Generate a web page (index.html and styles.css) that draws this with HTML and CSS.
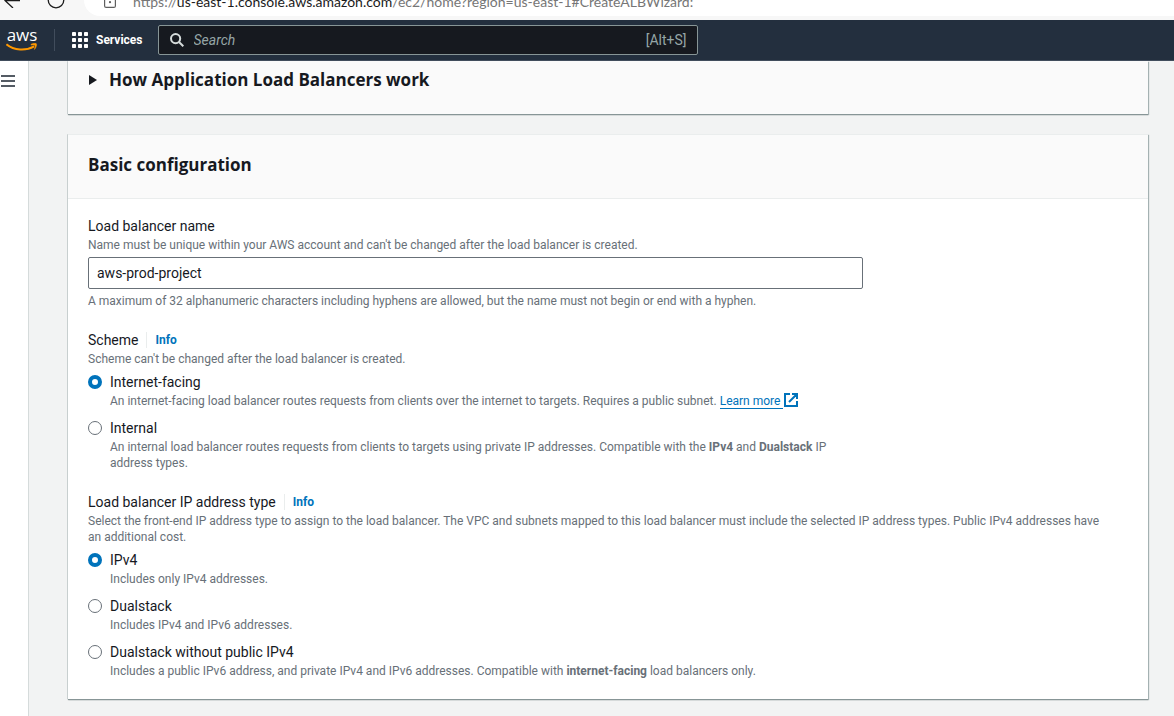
FILE: index.html
```html
<!DOCTYPE html>
<html lang="en">
<head>
<meta charset="utf-8">
<meta name="viewport" content="width=device-width, initial-scale=1">
<title>Create Application Load Balancer</title>
<link rel="stylesheet" href="styles.css">
</head>
<body>
<div class="browser">
  <div class="browser-row">
    <button class="tool back" aria-label="Back"><svg width="20" height="16" viewBox="0 0 20 16" fill="none" stroke="#1b1b1b" stroke-width="1.3"><path d="M19 8.500H4M12 1L4 8.500l8 7.500"/></svg></button>
    <button class="tool reload" aria-label="Reload"><svg width="18" height="18" viewBox="0 0 18 18" fill="none" stroke="#1b1b1b" stroke-width="1.3"><circle cx="9" cy="9" r="7.800"/></svg></button>
    <div class="address">
      <svg class="lock" width="12" height="16" viewBox="0 0 12 16" fill="none" stroke="#5f5f5f" stroke-width="1.2"><rect x=".6" y="5" width="10.800" height="10.400" rx="1.500"/><path d="M3 5V3.500a3 3 0 0 1 6 0V5"/><circle cx="6" cy="10.200" r=".5"/></svg>
      <span class="url">https://<span class="host">us-east-1.console.aws.amazon.com</span>/ec2/home?region=us-east-1#CreateALBWizard:</span>
    </div>
  </div>
</div>
<header class="nav">
  <a class="logo" href="#" aria-label="AWS">
    <span class="logo-text">aws</span>
    <svg class="smile" width="32" height="9" viewBox="0 0 32 9"><path d="M.4 1.200C8 7.600 20 8 28.200 3.300" fill="none" stroke="#f90" stroke-width="2"/><path d="M25 1.300c2-1 4.700-1.300 5.400-.5s-.3 4-2 5.700c.5-1.600 1-3.400.6-4-.5-.6-2.400-.6-4-.4z" fill="#f90" stroke="#f90" stroke-width=".5"/></svg>
  </a>
  <button class="services">
    <svg width="16" height="16" viewBox="0 0 16 16" fill="#fff"><rect width="4" height="4" rx=".8"/><rect x="6" width="4" height="4" rx=".8"/><rect x="12" width="4" height="4" rx=".8"/><rect y="6" width="4" height="4" rx=".8"/><rect x="6" y="6" width="4" height="4" rx=".8"/><rect x="12" y="6" width="4" height="4" rx=".8"/><rect y="12" width="4" height="4" rx=".8"/><rect x="6" y="12" width="4" height="4" rx=".8"/><rect x="12" y="12" width="4" height="4" rx=".8"/></svg>
    <span>Services</span>
  </button>
  <label class="search">
    <svg width="14" height="14" viewBox="0 0 14 14" fill="none" stroke="#d5dbdb" stroke-width="2"><circle cx="5.600" cy="5.600" r="4.600"/><path d="M9 9l4.300 4.300"/></svg>
    <input type="search" placeholder="Search" aria-label="Search">
    <span class="keys">[Alt+S]</span>
  </label>
</header>
<div class="shell">
  <aside class="rail">
    <button class="menu" aria-label="Open navigation"><svg width="14" height="12" viewBox="0 0 14 12" fill="#545b64"><path d="M0 0h14v2H0zM0 5h14v2H0zM0 10h14v2H0z"/></svg></button>
  </aside>
  <main class="main">
    <section class="card how">
      <button class="expander">
        <svg width="8" height="10" viewBox="0 0 8 10" fill="#16191f"><path d="M0 0l8 5-8 5z"/></svg>
        <span>How Application Load Balancers work</span>
      </button>
    </section>
    <section class="card">
      <div class="card-head"><h2>Basic configuration</h2></div>
      <form class="card-body">
        <div class="field">
          <label class="label" for="name">Load balancer name</label>
          <p class="hint">Name must be unique within your AWS account and can't be changed after the load balancer is created.</p>
          <input class="text" id="name" type="text" value="aws-prod-project">
          <p class="hint">A maximum of 32 alphanumeric characters including hyphens are allowed, but the name must not begin or end with a hyphen.</p>
        </div>
        <div class="field" role="radiogroup" aria-labelledby="scheme">
          <div class="label-row"><span class="label" id="scheme">Scheme</span><a class="info" href="#">Info</a></div>
          <p class="hint">Scheme can't be changed after the load balancer is created.</p>
          <div class="options narrow">
            <div class="option">
              <input type="radio" name="scheme" id="facing" checked>
              <div><label class="label" for="facing">Internet-facing</label>
              <p class="hint">An internet-facing load balancer routes requests from clients over the internet to targets. Requires a public subnet. <a class="learn" href="#"><span>Learn more</span><svg width="14" height="14" viewBox="0 0 14 14" fill="none" stroke="#0073bb" stroke-width="2"><path d="M6 1H1v12h12V8M8 1h5v5M13 1L5 9"/></svg></a></p></div>
            </div>
            <div class="option">
              <input type="radio" name="scheme" id="internal">
              <div><label class="label" for="internal">Internal</label>
              <p class="hint">An internal load balancer routes requests from clients to targets using private IP addresses. Compatible with the <b>IPv4</b> and <b>Dualstack</b> IP address types.</p></div>
            </div>
          </div>
        </div>
        <div class="field" role="radiogroup" aria-labelledby="iptype">
          <div class="label-row"><span class="label" id="iptype">Load balancer IP address type</span><a class="info" href="#">Info</a></div>
          <p class="hint">Select the front-end IP address type to assign to the load balancer. The VPC and subnets mapped to this load balancer must include the selected IP address types. Public IPv4 addresses have an additional cost.</p>
          <div class="options">
            <div class="option">
              <input type="radio" name="ip" id="ipv4" checked>
              <div><label class="label" for="ipv4">IPv4</label>
              <p class="hint">Includes only IPv4 addresses.</p></div>
            </div>
            <div class="option">
              <input type="radio" name="ip" id="dual">
              <div><label class="label" for="dual">Dualstack</label>
              <p class="hint">Includes IPv4 and IPv6 addresses.</p></div>
            </div>
            <div class="option">
              <input type="radio" name="ip" id="dualnp">
              <div><label class="label" for="dualnp">Dualstack without public IPv4</label>
              <p class="hint">Includes a public IPv6 address, and private IPv4 and IPv6 addresses. Compatible with <b>internet-facing</b> load balancers only.</p></div>
            </div>
          </div>
        </div>
      </form>
    </section>
  </main>
</div>
</body>
</html>
```
FILE: styles.css
```css
* { box-sizing: border-box; }
body {
  margin: 0;
  min-height: 100vh;
  display: flex;
  flex-direction: column;
  background: #f2f3f3;
  color: #16191f;
  font: 14px/22px Roboto, "Open Sans", sans-serif;
}
button { border: 0; padding: 0; background: none; color: inherit; font: inherit; }
h2, p { margin: 0; }
svg { display: block; flex: none; }

.browser {
  height: 20px;
  overflow: hidden;
  display: flex;
  align-items: flex-end;
  background: #f7f7f7;
}
.browser-row { flex: 1; display: flex; align-items: center; height: 36px; padding-bottom: 4px; }
.back { margin-left: 1px; }
.reload { margin-left: 26px; }
.address {
  flex: 1;
  display: flex;
  align-items: center;
  gap: 17px;
  height: 32px;
  margin-left: 19px;
  padding-left: 20px;
  border-radius: 16px 0 0 16px;
  background: #fff;
}
.url { padding-top: 4px; color: #767676; font: 14px/20px Lato, "Open Sans", sans-serif; white-space: nowrap; }
.host { color: #1b1b1b; }

.nav {
  display: flex;
  align-items: center;
  height: 41px;
  padding: 0 6px;
  background: #232f3e;
  border-bottom: 1px solid #414d5c;
}
.logo {
  display: flex;
  flex-direction: column;
  align-items: center;
  width: 32px;
  color: #fff;
  text-decoration: none;
}
.logo-text { font: 500 17px/14px "Open Sans", sans-serif; }
.smile { margin-top: 1px; }
.services {
  display: flex;
  align-items: center;
  gap: 8px;
  height: 22px;
  margin-left: 16px;
  padding: 0 15px 0 17px;
  border-left: 1px solid #414d5c;
  color: #fff;
  font-weight: 700;
  font-size: 12px;
}
.search {
  display: flex;
  align-items: center;
  gap: 10px;
  flex: 0 1 540px;
  height: 30px;
  padding: 0 10px 0 11px;
  border: 1px solid #879596;
  border-radius: 2px;
  background: #16191f;
}
.search input {
  flex: 1;
  min-width: 0;
  border: 0;
  padding: 0;
  background: none;
  color: #fff;
  font: inherit;
}
.search input::placeholder { color: #95a5a6; font-style: italic; opacity: 1; }
.keys { color: #95a5a6; }

.shell { flex: 1; display: flex; }
.rail { width: 29px; background: #fff; border-right: 1px solid #d5dbdb; padding: 14px 1px; }
.menu { display: block; }
.main { flex: 1; min-width: 0; display: flex; flex-direction: column; gap: 20px; padding: 0 26px 16px 39px; }
.card {
  background: #fff;
  border-top: 1px solid #eaeded;
  box-shadow: 0 1px 1px #879596, 1px 1px 1px #aab7b8, -1px 0 #d5dbdb;
}
.how { border-top: 0; background: #fafafa; padding: 8px 21px 23px; }
.expander { display: flex; align-items: center; gap: 12px; font-family: "Open Sans", sans-serif; font-size: 17px; font-weight: 700; }
.card-head { padding: 19px 20px 22px; background: #fafafa; border-bottom: 1px solid #eaeded; }
h2 { font: 700 17px/22px "Open Sans", sans-serif; }
.card-body { display: flex; flex-direction: column; gap: 20px; padding: 16px 34px 20px 20px; }
.label { display: block; }
.hint { color: #687078; font-size: 12px; line-height: 16px; }
.text {
  display: block;
  width: 100%;
  max-width: 775px;
  height: 32px;
  margin: 4px 0;
  padding: 0 8px;
  border: 1px solid #687078;
  border-radius: 2px;
  background: #fff;
  color: #16191f;
  font: inherit;
}
.label-row { display: flex; align-items: center; }
.info {
  margin-left: 8px;
  padding-left: 8px;
  border-left: 1px solid #eaeded;
  color: #0073bb;
  font-size: 12px;
  line-height: 16px;
  font-weight: 700;
  text-decoration: none;
}
.options { display: flex; flex-direction: column; gap: 8px; padding-top: 4px; }
.narrow { max-width: 775px; }
.option { display: flex; gap: 8px; }
.option input {
  appearance: none;
  flex: none;
  width: 14px;
  height: 14px;
  margin: 4px 0;
  border: 1px solid #687078;
  border-radius: 50%;
  background: #fff;
}
.option input:checked { border: 4px solid #0073bb; }
.learn { color: #0073bb; text-decoration: none; white-space: nowrap; }
.learn span { padding-right: 3px; border-bottom: 1px solid #0073bb; }
.learn svg { display: inline-block; vertical-align: -2px; margin: -2px 0 0 1px; }
```
